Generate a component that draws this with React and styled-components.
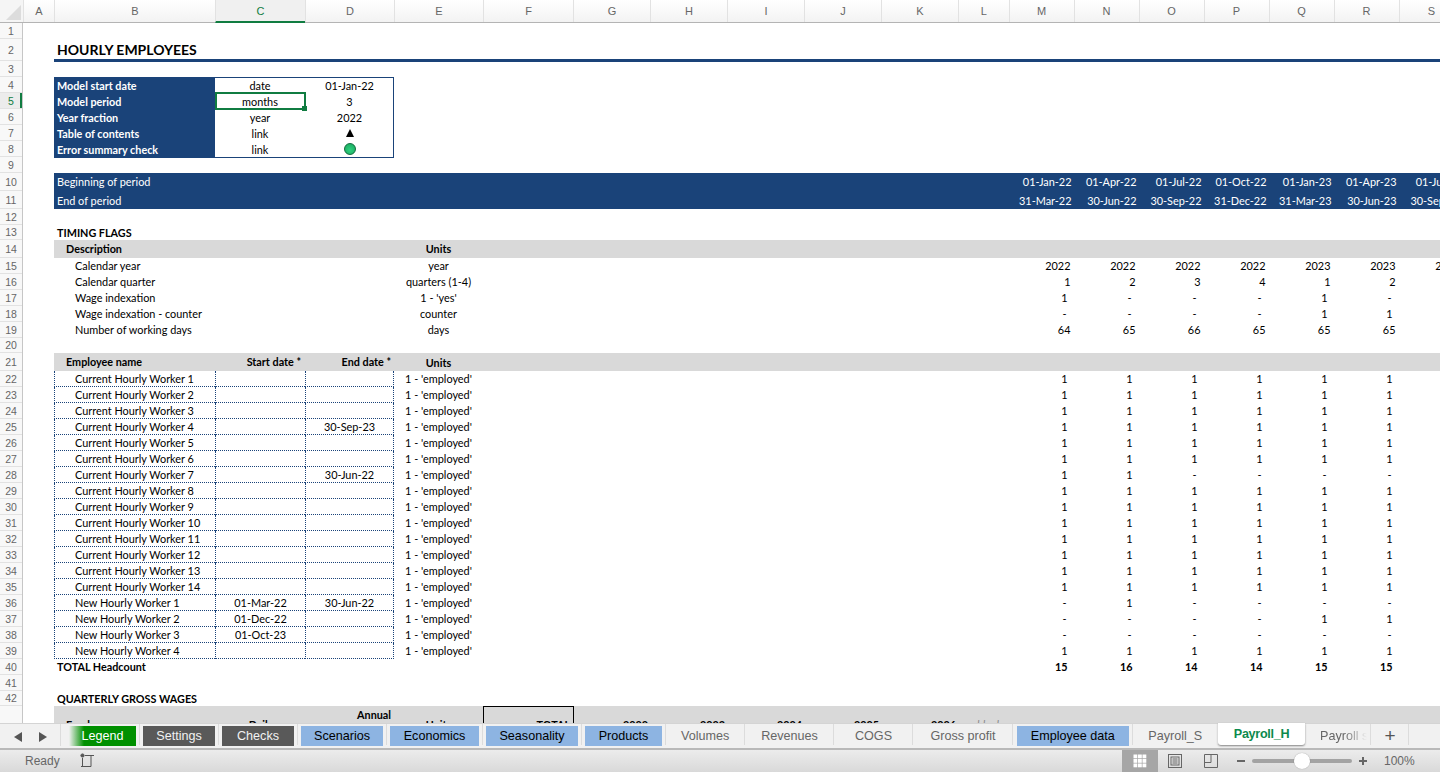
import React from 'react';
import styled, {createGlobalStyle} from 'styled-components';

const navy = '#1a4379';
const green = '#107c41';

const GlobalStyle = createGlobalStyle`
  html, body {
    margin: 0;
    padding: 0;
    height: 100%;
    overflow: hidden;
    background: #fff;
  }
`;

const Window = styled.div`
  position: relative;
  width: 1440px;
  height: 772px;
  overflow: hidden;
  font-family: "Lato", "Open Sans", sans-serif;
  font-size: 11px;
  color: #000;
`;

// column header strip
const ColumnBar = styled.div`
  position: absolute;
  top: 0;
  left: 0;
  display: flex;
  width: 1440px;
  height: 23px;
  background: linear-gradient(#fff, #f3f3f3);
  border-bottom: 1px solid #b4b4b4;
  box-sizing: border-box;
`;

const Corner = styled.div`
  width: 23px;
  flex: none;
  position: relative;
  background: #f5f5f5;
  &:after {
    content: "";
    position: absolute;
    right: 2px;
    bottom: 2px;
    border-left: 15px solid transparent;
    border-bottom: 15px solid #dcdcdc;
  }
`;

const ColumnLabel = styled.div`
  flex: none;
  width: ${p => p.$w}px;
  box-sizing: border-box;
  display: flex;
  align-items: center;
  justify-content: center;
  font-family: "Liberation Sans", sans-serif;
  font-size: 11px;
  color: ${p => (p.$active ? green : '#666')};
  border-left: 1px solid #e2e2e2;
  background: ${p => (p.$active ? '#f0f0f0' : 'transparent')};
  border-bottom: ${p => (p.$active ? `2px solid ${green}` : '0')};
  margin-bottom: ${p => (p.$active ? '-1px' : '0')};
`;

// row header strip
const RowBar = styled.div`
  position: absolute;
  top: 23px;
  left: 0;
  width: 23px;
  height: 700px;
  background: #f8f8f8;
  border-right: 1px solid #c6c6c6;
  box-sizing: border-box;
  overflow: hidden;
`;

const RowLabel = styled.div`
  height: ${p => p.$h}px;
  box-sizing: border-box;
  display: flex;
  align-items: center;
  justify-content: center;
  font-family: "Liberation Sans", sans-serif;
  font-size: 10.5px;
  color: ${p => (p.$active ? green : '#666')};
  border-bottom: 1px solid #e2e2e2;
  background: ${p => (p.$active ? '#ececec' : 'transparent')};
  box-shadow: ${p => (p.$active ? `inset -2px 0 0 ${green}` : 'none')};
`;

const Sheet = styled.div`
  position: absolute;
  top: 23px;
  left: 23px;
  width: 1417px;
  height: 700px;
  overflow: hidden;
`;

const Row = styled.div`
  position: relative;
  height: ${p => p.$h}px;
  display: grid;
  grid-template-columns: 31px 161px 90px 89px 89px 90px 77px 77px 77px 77px 77px 50.5px repeat(7, 65px);
  --cell-lift: ${p => (p.$lift ? '2px' : '0px')};
  &:before {
    content: "";
    display: ${p => (p.$band ? 'block' : 'none')};
    position: absolute;
    left: 31px;
    right: 0;
    top: 0;
    bottom: 0;
    background: ${p => p.$band};
  }
`;

const TitleRule = styled.div`
  position: absolute;
  left: 31px;
  right: 0;
  bottom: -1px;
  height: 3px;
  background: ${navy};
`;

const Cell = styled.div`
  position: relative;
  grid-column: ${p => p.$col};
  display: flex;
  align-items: ${p => p.$valign || 'center'};
  justify-content: ${p => ({left: 'flex-start', right: 'flex-end', center: 'center'}[p.$align || 'left'])};
  padding-left: ${p => (p.$align === 'center' ? 0 : p.$pad || 0)}px;
  padding-right: ${p => (p.$align === 'right' ? p.$pad || 0 : 0)}px;
  padding-top: ${p => p.$pt || 0}px;
  padding-bottom: var(--cell-lift);
  box-sizing: border-box;
  white-space: nowrap;
  font-weight: ${p => (p.$bold ? 700 : 400)};
  color: ${p => p.$color || 'inherit'};
  background: ${p => p.$bg || 'transparent'};
  font-size: ${p => p.$size || (p.$bold ? 10.8 : 10.9)}px;
  min-width: 0;
`;

const DottedCell = styled(Cell)`
  padding-bottom: 0;
  border-left: 1px dotted ${navy};
  border-bottom: 1px dotted ${navy};
  border-right: ${p => (p.$last ? `1px dotted ${navy}` : '0')};
  border-top: ${p => (p.$first ? `1px dotted ${navy}` : '0')};
`;

const ModelBox = styled.div`
  position: absolute;
  left: 31px;
  top: 54px;
  width: 340px;
  height: 81px;
  box-sizing: border-box;
  border: 1px solid ${navy};
  pointer-events: none;
`;

const Selection = styled.div`
  position: absolute;
  left: 192px;
  top: 69px;
  width: 91px;
  height: 18px;
  box-sizing: border-box;
  border: 2px solid ${green};
  &:after {
    content: "";
    position: absolute;
    right: -3px;
    bottom: -3px;
    width: 5px;
    height: 5px;
    background: ${green};
  }
`;

const Triangle = styled.span`
  width: 0;
  height: 0;
  border-left: 4.5px solid transparent;
  border-right: 4.5px solid transparent;
  border-bottom: 8px solid #000;
`;

const StatusDot = styled.span`
  width: 12px;
  height: 12px;
  border-radius: 50%;
  box-sizing: border-box;
  border: 1px solid #0f6b3c;
  background: radial-gradient(circle at 50% 60%, #2fd07f, #18a75c);
`;

const TotalBox = styled.div`
  position: absolute;
  left: 460px;
  top: 683px;
  width: 91px;
  height: 40px;
  box-sizing: border-box;
  border: 1px solid #000;
`;

// sheet tabs
const TabBar = styled.div`
  position: absolute;
  top: 723px;
  left: 0;
  width: 1440px;
  height: 27px;
  display: flex;
  box-sizing: border-box;
  background: #f1f1f1;
  border-top: 1px solid #d4d4d4;
  border-bottom: 2px solid #b9b9b9;
`;

const TabNav = styled.div`
  flex: none;
  width: 65.5px;
  height: 24px;
  position: relative;
  &:after {
    content: "";
    position: absolute;
    left: 60px;
    top: 0;
    height: 22px;
    width: 1px;
    background: #dcdcdc;
  }
  svg {
    position: absolute;
    top: 8px;
  }
`;

const tabFills = {
  green: 'linear-gradient(90deg, #f1f1f1 0, #009000 15px)',
  gray: 'linear-gradient(#595959, #595959)',
  blue: 'linear-gradient(#8db4e2, #8db4e2)',
};
const tabText = {green: '#fff', gray: '#f2f2f2', blue: '#000'};

const Tab = styled.div`
  flex: none;
  position: relative;
  width: ${p => p.$w}px;
  height: 24px;
  box-sizing: border-box;
  padding: 2px ${p => p.$inset || 3.5}px 2px;
  background-image: ${p => tabFills[p.$kind] || 'none'};
  background-clip: content-box;
  background-origin: content-box;
  display: flex;
  align-items: center;
  justify-content: center;
  font-family: "Liberation Sans", sans-serif;
  font-size: 12.6px;
  color: ${p => tabText[p.$kind] || '#666'};
  &:after {
    content: "";
    position: absolute;
    right: 0;
    top: 0;
    width: 1px;
    height: 21px;
    background: #dcdcdc;
  }
`;

const ActiveTab = styled.div`
  flex: none;
  width: 87px;
  height: 22px;
  margin-top: -1px;
  background: #fff;
  border-radius: 0 0 3px 3px;
  box-shadow: 0 1px 2px rgba(0, 0, 0, 0.45);
  display: flex;
  align-items: center;
  justify-content: center;
  font-family: "Liberation Sans", sans-serif;
  font-size: 12.6px;
  font-weight: 700;
  letter-spacing: -0.3px;
  color: #0c8a4d;
`;

const FadedLabel = styled.span`
  width: 47px;
  margin-left: 11px;
  overflow: hidden;
  white-space: nowrap;
  -webkit-mask-image: linear-gradient(90deg, #000 50%, transparent 100%);
  mask-image: linear-gradient(90deg, #000 50%, transparent 100%);
`;

const AddTab = styled(Tab)`
  font-size: 19px;
  color: #555;
`;

// status bar
const StatusBar = styled.div`
  position: absolute;
  top: 750px;
  left: 0;
  width: 1440px;
  height: 22px;
  background: linear-gradient(#ececec, #d9d9d9);
  font-family: "Liberation Sans", sans-serif;
  font-size: 12px;
  color: #666;
`;

const StatusText = styled.span`
  position: absolute;
  left: ${p => p.$x}px;
  top: 4px;
`;

const StatusIcon = styled.svg`
  position: absolute;
  left: ${p => p.$x}px;
  top: ${p => p.$y || 3}px;
`;

const ViewActive = styled.div`
  position: absolute;
  left: 1122px;
  top: 0;
  width: 36px;
  height: 22px;
  background: #a6a6a6;
`;

const Slider = styled.div`
  position: absolute;
  left: 1252px;
  top: 9px;
  width: 100px;
  height: 4px;
  border-radius: 2px;
  background: #a3a3a3;
`;

const Knob = styled.div`
  position: absolute;
  left: 42px;
  top: -6px;
  width: 16px;
  height: 16px;
  border-radius: 50%;
  background: #fff;
  box-shadow: 0 0 1px rgba(0, 0, 0, 0.4);
`;

const columns = [
  ['A', 31], ['B', 161], ['C', 90], ['D', 89], ['E', 89], ['F', 90], ['G', 77], ['H', 77], ['I', 77],
  ['J', 77], ['K', 77], ['L', 50.5], ['M', 65], ['N', 65], ['O', 65], ['P', 65], ['Q', 65], ['R', 65], ['S', 65],
];

const rowHeights = [16, 22, 16, 16, 16, 16, 16, 16, 16, 18, 18, 16, 15, 18, 16, 16, 16, 16, 16, 15, 18];
for (let i = 22; i <= 41; i++) rowHeights.push(16);
rowHeights.push(15);

const FIRST_VALUE = 13; // grid column of M

const Values = ({items, pad = 3, ...rest}) =>
  items.map((v, i) => (
    <Cell key={i} $col={FIRST_VALUE + i} $align="right" $pad={v === '-' ? 7 : pad} {...rest}>
      {v}
    </Cell>
  ));

const workers = [
  ['Current Hourly Worker 1', '', '', '111111'],
  ['Current Hourly Worker 2', '', '', '111111'],
  ['Current Hourly Worker 3', '', '', '111111'],
  ['Current Hourly Worker 4', '', '30-Sep-23', '111111'],
  ['Current Hourly Worker 5', '', '', '111111'],
  ['Current Hourly Worker 6', '', '', '111111'],
  ['Current Hourly Worker 7', '', '30-Jun-22', '11----'],
  ['Current Hourly Worker 8', '', '', '111111'],
  ['Current Hourly Worker 9', '', '', '111111'],
  ['Current Hourly Worker 10', '', '', '111111'],
  ['Current Hourly Worker 11', '', '', '111111'],
  ['Current Hourly Worker 12', '', '', '111111'],
  ['Current Hourly Worker 13', '', '', '111111'],
  ['Current Hourly Worker 14', '', '', '111111'],
  ['New Hourly Worker 1', '01-Mar-22', '30-Jun-22', '-1----'],
  ['New Hourly Worker 2', '01-Dec-22', '', '----11'],
  ['New Hourly Worker 3', '01-Oct-23', '', '------'],
  ['New Hourly Worker 4', '', '', '111111'],
];

const modelRows = [
  ['Model start date', 'date', '01-Jan-22'],
  ['Model period', 'months', '3'],
  ['Year fraction', 'year', '2022'],
  ['Table of contents', 'link', <Triangle />],
  ['Error summary check', 'link', <StatusDot />],
];

const flagRows = [
  ['Calendar year', 'year', ['2022', '2022', '2022', '2022', '2023', '2023', '2023'], 3],
  ['Calendar quarter', 'quarters (1-4)', ['1', '2', '3', '4', '1', '2'], 3],
  ['Wage indexation', "1 - 'yes'", ['1', '-', '-', '-', '1', '-'], 6],
  ['Wage indexation - counter', 'counter', ['-', '-', '-', '-', '1', '1'], 6],
  ['Number of working days', 'days', ['64', '65', '66', '65', '65', '65'], 3],
];

const tabs = [
  ['Legend', 74, 'green'],
  ['Settings', 79, 'gray'],
  ['Checks', 79, 'gray'],
  ['Scenarios', 89, 'blue'],
  ['Economics', 96, 'blue'],
  ['Seasonality', 99, 'blue'],
  ['Products', 84, 'blue'],
  ['Volumes', 79.5],
  ['Revenues', 89],
  ['COGS', 79],
  ['Gross profit', 100],
  ['Employee data', 119.5, 'blue'],
  ['Payroll_S', 85.5],
];

const PageIcon = () => (
  <StatusIcon $x={1168} $y={4} width="15" height="15" viewBox="0 0 15 15" fill="none" stroke="#666">
    <rect x="0.5" y="0.5" width="13" height="13" />
    <rect x="3" y="3" width="8" height="8" />
    <path d="M4.5 5h5M4.5 7h5M4.5 9h5" />
  </StatusIcon>
);

const BreakIcon = () => (
  <StatusIcon $x={1204} $y={4} width="15" height="15" viewBox="0 0 15 15" fill="none" stroke="#666">
    <path d="M0.5 0.5h13v13h-13zM0.5 8.5h6.5v-8" />
  </StatusIcon>
);

const GridIcon = () => (
  <StatusIcon $x={1133} $y={4} width="14" height="14" viewBox="0 0 14 14" fill="#fff">
    {[0, 1, 2].flatMap(r =>
      [0, 1, 2].map(c => <rect key={`${r}${c}`} x={c * 4.5 + 0.5} y={r * 4.5 + 0.5} width="3.8" height="3.8" />)
    )}
  </StatusIcon>
);

const MacroIcon = () => (
  <StatusIcon $x={80} $y={3} width="16" height="16" viewBox="0 0 16 16" fill="none" stroke="#555">
    <circle cx="2.5" cy="2.5" r="1.6" fill="#555" />
    <path d="M5 2.5h9M11 2.5v11M2.5 5v8.5h8.5M1 13.5h3.5" />
  </StatusIcon>
);

export default function App() {
  const labels = rowHeights.map((h, i) => (
    <RowLabel key={i} $h={h} $active={i === 4}>{i + 1}</RowLabel>
  ));
  return (
    <Window>
      <GlobalStyle />
      <ColumnBar>
        <Corner />
        {columns.map(([name, w]) => (
          <ColumnLabel key={name} $w={w} $active={name === 'C'}>{name}</ColumnLabel>
        ))}
      </ColumnBar>
      <RowBar>{labels}</RowBar>

      <Sheet>
        <Row $h={16} />
        <Row $h={22} $lift>
          <Cell $col={2} $pad={3} $bold $size={14}>HOURLY EMPLOYEES</Cell>
          <TitleRule />
        </Row>
        <Row $h={16} />

        {modelRows.map(([label, unit, value]) => (
          <Row $h={16} key={label}>
            <Cell $col={2} $pad={3} $bold $bg={navy} $color="#fff">{label}</Cell>
            <Cell $col={3} $align="center">{unit}</Cell>
            <Cell $col={4} $align="center">{value}</Cell>
          </Row>
        ))}

        <Row $h={16} />
        <Row $h={18} $band={navy} $lift>
          <Cell $col={2} $pad={3} $color="#fff">Beginning of period</Cell>
          <Values
            items={['01-Jan-22', '01-Apr-22', '01-Jul-22', '01-Oct-22', '01-Jan-23', '01-Apr-23', '01-Jul-23']}
            pad={2}
            $color="#fff"
          />
        </Row>
        <Row $h={18} $band={navy} $lift>
          <Cell $col={2} $pad={3} $color="#fff" $pt={2}>End of period</Cell>
          <Values
            items={['31-Mar-22', '30-Jun-22', '30-Sep-22', '31-Dec-22', '31-Mar-23', '30-Jun-23', '30-Sep-23']}
            pad={2}
            $color="#fff"
            $pt={2}
          />
        </Row>
        <Row $h={16} />
        <Row $h={15}>
          <Cell $col={2} $pad={3} $bold>TIMING FLAGS</Cell>
        </Row>
        <Row $h={18} $band="#d9d9d9" $lift>
          <Cell $col={2} $pad={12} $bold>Description</Cell>
          <Cell $col={5} $align="center" $bold>Units</Cell>
        </Row>
        {flagRows.map(([label, unit, values, pad]) => (
          <Row $h={16} key={label} $lift>
            <Cell $col={2} $pad={21}>{label}</Cell>
            <Cell $col={5} $align="center">{unit}</Cell>
            <Values items={values} pad={pad} />
          </Row>
        ))}
        <Row $h={15} />
        <Row $h={18} $band="#d9d9d9" $lift>
          <Cell $col={2} $pad={12} $bold>Employee name</Cell>
          <Cell $col={3} $align="right" $pad={4} $bold>Start date *</Cell>
          <Cell $col={4} $align="right" $pad={3} $bold>End date *</Cell>
          <Cell $col={5} $align="center" $bold $pt={2}>Units</Cell>
        </Row>
        {workers.map(([name, start, end, flags]) => (
          <Row $h={16} key={name} $lift>
            <DottedCell $col={2} $pad={20}>{name}</DottedCell>
            <DottedCell $col={3} $align="center">{start}</DottedCell>
            <DottedCell $col={4} $align="center" $last>{end}</DottedCell>
            <Cell $col={5} $align="center">1 - 'employed'</Cell>
            <Values items={flags.split('')} pad={6} />
          </Row>
        ))}
        <Row $h={16} $lift>
          <Cell $col={2} $pad={3} $bold>TOTAL Headcount</Cell>
          <Values items={['15', '16', '14', '14', '15', '15']} pad={6} $bold />
        </Row>
        <Row $h={16} />
        <Row $h={15}>
          <Cell $col={2} $pad={3} $bold>QUARTERLY GROSS WAGES</Cell>
        </Row>
        <Row $h={44} $band="#d9d9d9">
          <Cell $col={2} $pad={12} $bold $valign="flex-start" $pt={12}>Employee name</Cell>
          <Cell $col={3} $align="right" $pad={4} $bold $valign="flex-start" $pt={12}>Daily wage</Cell>
          <Cell $col={4} $align="right" $pad={3} $bold $valign="flex-start" $pt={2}>Annual</Cell>
          <Cell $col={5} $align="center" $bold $valign="flex-start" $pt={12}>Units</Cell>
          <Cell $col={6} $align="right" $pad={3} $bold $valign="flex-start" $pt={12}>TOTAL</Cell>
          {['2022', '2023', '2024', '2025', '2026'].map((y, i) => (
            <Cell key={y} $col={7 + i} $align="right" $pad={2} $bold $valign="flex-start" $pt={12}>{y}</Cell>
          ))}
          <Cell $col={12} $pad={19} $color="#8a8a8a" $valign="flex-start" $pt={12}><em>blank</em></Cell>
        </Row>
        <ModelBox />
        <Selection />
        <TotalBox />
      </Sheet>

      <TabBar>
        <TabNav>
          <svg style={{left: 14}} width="9" height="10" viewBox="0 0 9 10" fill="#555"><path d="M8 0v10L0 5z" /></svg>
          <svg style={{left: 38}} width="9" height="10" viewBox="0 0 9 10" fill="#555"><path d="M1 0v10l8-5z" /></svg>
        </TabNav>
        {tabs.map(([label, w, kind]) => (
          <Tab key={label} $w={w} $kind={kind}>{label}</Tab>
        ))}
        <ActiveTab>Payroll_H</ActiveTab>
        <Tab $w={66} $inset={0}><FadedLabel>Payroll s</FadedLabel></Tab>
        <AddTab $w={38}>+</AddTab>
      </TabBar>

      <StatusBar>
        <StatusText $x={25}>Ready</StatusText>
        <MacroIcon />
        <ViewActive />
        <GridIcon />
        <PageIcon />
        <BreakIcon />
        <StatusIcon $x={1237} $y={10} width="8" height="3" viewBox="0 0 8 3" fill="#666"><rect width="8" height="2" /></StatusIcon>
        <Slider><Knob /></Slider>
        <StatusIcon $x={1359} $y={7} width="8" height="8" viewBox="0 0 8 8" fill="#666"><path d="M3 0h2v3h3v2H5v3H3V5H0V3h3z" /></StatusIcon>
        <StatusText $x={1384}>100%</StatusText>
      </StatusBar>
    </Window>
  );
}
